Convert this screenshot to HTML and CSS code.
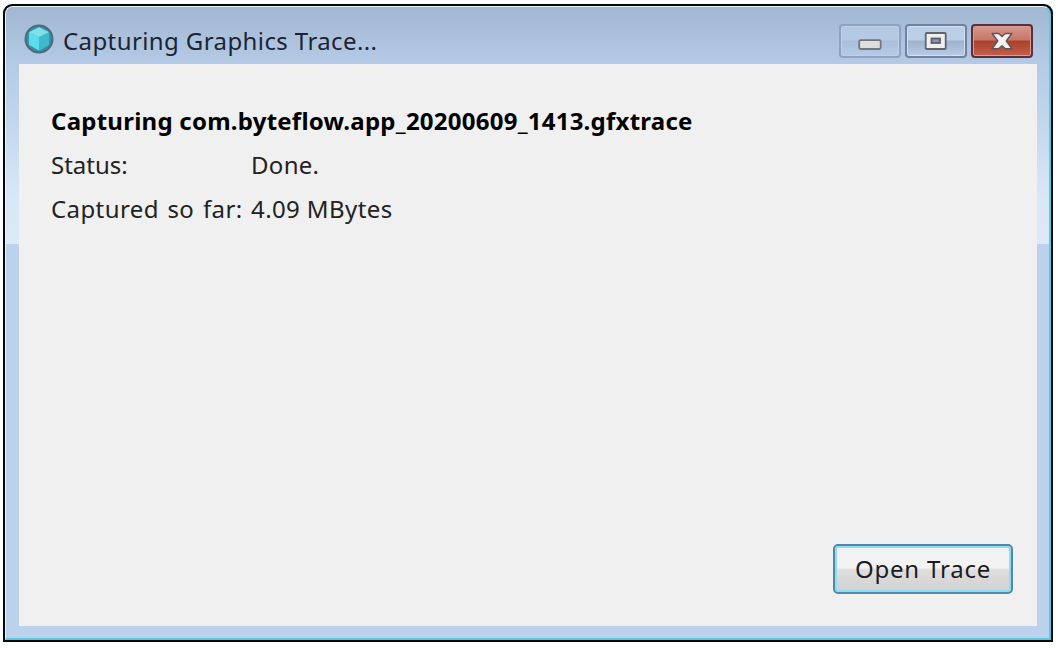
FILE: index.html
```html
<!DOCTYPE html>
<html lang="en">
<head>
<meta charset="utf-8">
<title>Capturing Graphics Trace...</title>
<link rel="stylesheet" href="styles.css">
</head>
<body>
<div class="window">
  <div class="frame">
    <header class="titlebar">
      <svg class="app-icon" viewBox="0 0 30 30">
        <circle cx="15" cy="15" r="13.5" fill="#3990a3" stroke="#4b6c80" stroke-width="2"/>
        <path d="M15 3.2 25 8.2v12.5L15 26.5 5 20.7V8.2z" fill="#42bfd0"/>
        <path d="M15 3.2 25 8.2 15 13 5 8.2z" fill="#7fe0ea"/>
        <path d="M5 8.2 15 13v13.5L5 20.7z" fill="#5bdcea"/>
        <path d="M25 8.2 15 13v13.5l10-5.8z" fill="#3fb9cc"/>
      </svg>
      <span class="title">Capturing Graphics Trace...</span>
      <div class="controls">
        <button class="control minimize" aria-label="Minimize">
          <svg viewBox="0 0 62 34"><rect x="20.2" y="16.2" width="21.5" height="8.8" rx="1.5" fill="#dededc" stroke="#73757f" stroke-width="1.8"/></svg>
        </button>
        <button class="control maximize" aria-label="Maximize">
          <svg viewBox="0 0 62 34"><rect x="20.7" y="9" width="20" height="16" rx="1" fill="#efefef" stroke="#63646e" stroke-width="1.8"/><rect x="26.5" y="14.5" width="8.5" height="4.5" fill="#8994a8" stroke="#5c5e69" stroke-width="1.8"/></svg>
        </button>
        <button class="control close" aria-label="Close">
          <svg viewBox="0 0 62 34"><path d="M21.2 9.5h6.5l3.3 3 3.3-3h6.5l-5.5 7.5 5.7 7.8h-6.6L31 21.7l-3.4 3.1H21l5.7-7.8z" fill="#f5f3f2" stroke="#65535c" stroke-width="1.5" stroke-linejoin="round"/></svg>
        </button>
      </div>
    </header>
    <main class="client">
      <h1 class="heading">Capturing com.byteflow.app_20200609_1413.gfxtrace</h1>
      <dl class="details">
        <dt class="status-label">Status:</dt><dd class="status-value">Done.</dd>
        <dt class="size-label">Captured so far:</dt><dd class="size-value">4.09 MBytes</dd>
      </dl>
      <button class="open">Open Trace</button>
    </main>
  </div>
</div>
</body>
</html>
```
FILE: styles.css
```css
* { box-sizing: border-box; }
body {
  margin: 0;
  padding: 4px 5px 6px 3px;
  background: #fff;
  font-family: "Noto Sans", "Open Sans", sans-serif;
  font-size: 24px;
  color: #222;
}
.window {
  height: 638px;
  padding: 2px;
  background: #050708;
  border-radius: 9px 9px 0 0;
}
.frame {
  height: 634px;
  padding: 0 12px 13px 13px;
  border: 1px solid #e9f3fa;
  border-right: 2px solid #55cce9;
  border-bottom: 2px solid #55c9df;
  border-radius: 8px 8px 0 0;
  background: linear-gradient(#a2b7d1 0, #b5cae6 58px, #c1d5ec 110px, #d9e8f6 190px, #dce9f6 237px, #bcd1eb 237px, #bcd1eb 100%);
}
.titlebar {
  display: flex;
  align-items: flex-start;
  height: 57px;
  padding: 17px 4px 0 5px;
}
.app-icon { width: 30px; height: 30px; }
.title {
  margin-left: 9px;
  line-height: 34px;
  letter-spacing: 0.4px;
  color: #1c2434;
  white-space: nowrap;
}
.controls { display: flex; gap: 4px; margin-left: auto; }
.control {
  width: 62px;
  height: 34px;
  padding: 0;
  border: 2px solid #6e819e;
  border-radius: 4px;
  box-shadow: inset 0 0 0 1px #d0dff1;
  background: linear-gradient(#bdcfe7 0 47%, #9eb2cf 50%, #b8cce5);
}
.control svg { display: block; width: 62px; height: 34px; margin: -2px; }
.minimize { border-color: #8fa2bf; background: linear-gradient(#b5c9e3 0 47%, #aabfdb 50%, #b6cbe6); box-shadow: inset 0 0 0 1px #bfd1e9; }
.close {
  border-color: #56303f;
  box-shadow: inset 0 0 0 1px #dd9c90;
  background: linear-gradient(#d5988b 0, #c67768 47%, #aa3f2c 50%, #c4604a);
}
.client {
  display: flex;
  flex-direction: column;
  height: 562px;
  padding: 35px 24px 32px 32px;
  background: #f0f0f0;
}
.heading {
  margin: 0;
  font-size: 24px;
  line-height: 44px;
  letter-spacing: 0.24px;
  color: #000;
  white-space: nowrap;
}
.details {
  display: grid;
  grid-template-columns: 200px auto;
  grid-auto-rows: 44px;
  margin: 0;
  line-height: 44px;
  white-space: nowrap;
}
.details dd { margin: 0; }
.status-value { letter-spacing: 0.3px; }
.size-label { letter-spacing: 0.4px; word-spacing: 2px; }
.size-value { letter-spacing: 0.4px; }
.open {
  width: 180px;
  height: 50px;
  margin: auto 0 0 auto;
  padding: 0 0 2px;
  border: 2px solid #4f8ba8;
  border-radius: 5px;
  box-shadow: inset 0 0 0 2px #8fdcf3;
  background: linear-gradient(#f3f3f3 0 47%, #dedede 52%, #d1d1d1);
  font: inherit;
  letter-spacing: 0.8px;
  color: #1c1c1c;
}
```
